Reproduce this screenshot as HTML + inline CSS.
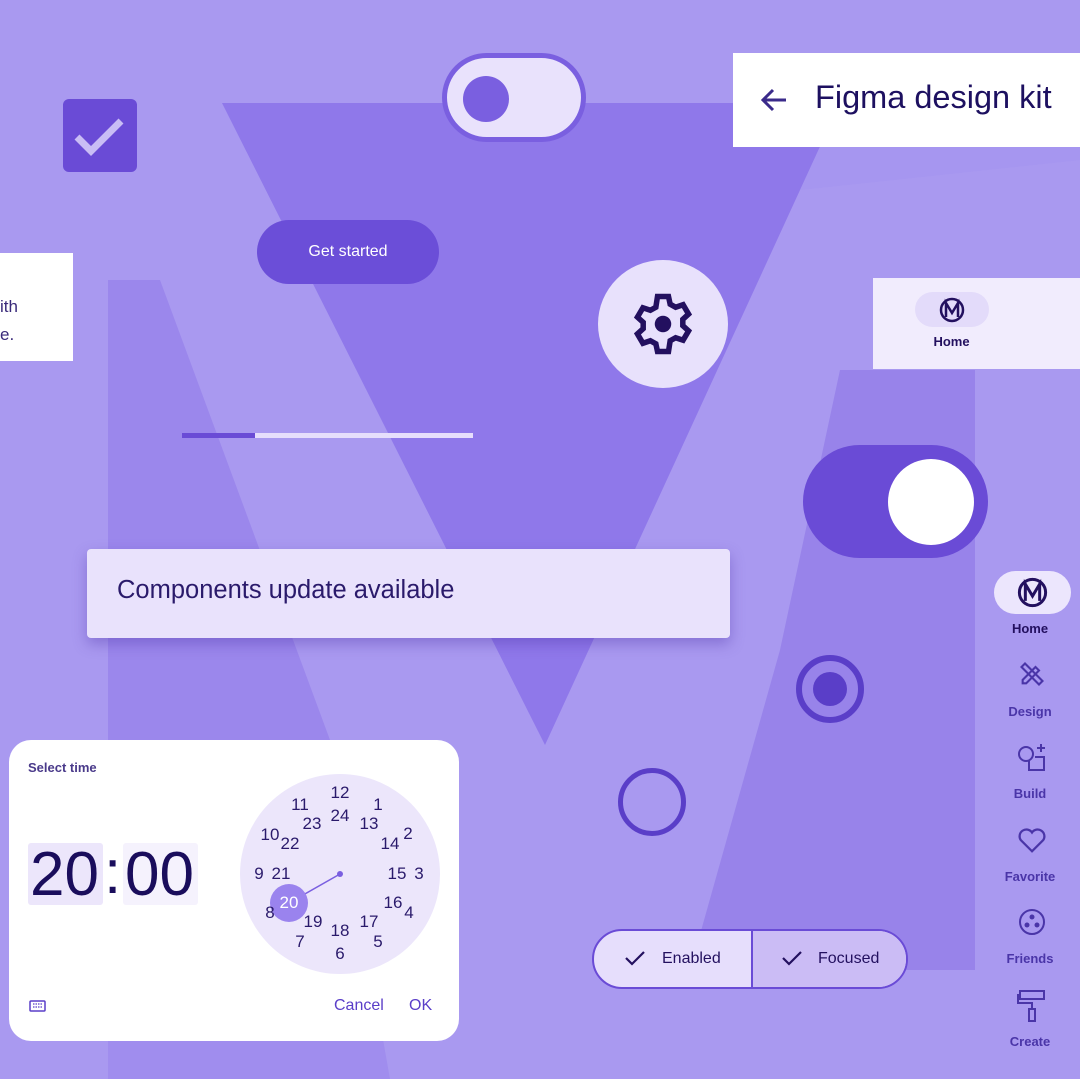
<!DOCTYPE html>
<html><head><meta charset="utf-8"><style>
*{margin:0;padding:0;box-sizing:border-box}
body{width:1080px;height:1079px;overflow:hidden;background:#a999f0;font-family:"Liberation Sans",sans-serif;position:relative}
.a{position:absolute}
.num{position:absolute;transform:translate(-50%,-50%);font-size:17px;color:#2a1a6b}
.navl{position:absolute;left:980px;width:100px;text-align:center;font-size:13px;font-weight:bold;color:#4a35a8}
.tm{position:absolute;font-size:62px;color:#1a0d5c;line-height:62px}
</style></head><body>
<svg class="a" style="left:0;top:0" width="1080" height="1079">
<polygon points="222,103 840,103 545,745" fill="#8f78ea"/>
<polygon points="108,280 160,280 330,740 108,740" fill="#9b87ec"/>
<polygon points="108,740 330,740 390,1079 108,1079" fill="#a08dee"/>
<polygon points="975,370 975,970 690,970 780,650 840,370" fill="#9883ea"/>
<polygon points="840,103 1080,103 1080,160 800,190" fill="#a493f0" opacity="0.5"/>
</svg>
<!-- checkbox -->
<div class="a" style="left:63px;top:99px;width:74px;height:73px;background:#6a4bd6;border-radius:6px"></div>
<svg class="a" style="left:63px;top:99px" width="74" height="73"><path d="M14 38 L28 52 L58 22" stroke="#c9bdf5" stroke-width="7" fill="none"/></svg>
<!-- small toggle -->
<div class="a" style="left:442px;top:53px;width:144px;height:89px;border-radius:45px;background:#e9e2fc;border:5px solid #7a5fe0"></div>
<div class="a" style="left:463px;top:76px;width:46px;height:46px;border-radius:50%;background:#7a5fe0"></div>
<!-- header -->
<div class="a" style="left:733px;top:53px;width:347px;height:94px;background:#fff"></div>
<svg class="a" style="left:758px;top:85px" width="32" height="30"><path d="M28 15 H5 M15 5 L5 15 L15 25" stroke="#3a2a8a" stroke-width="3" fill="none"/></svg>
<div class="a" style="left:815px;top:79px;font-size:32.5px;color:#1d1060">Figma design kit</div>
<!-- get started -->
<div class="a" style="left:257px;top:220px;width:182px;height:64px;border-radius:32px;background:#6b4ed8;color:#fff;font-size:16px;text-align:center;line-height:64px">Get started</div>
<!-- left card -->
<div class="a" style="left:0;top:253px;width:73px;height:108px;background:#fff"></div>
<div class="a" style="left:0;top:293px;font-size:17px;color:#3a2a7a;line-height:28px">ith<br>e.</div>
<!-- gear -->
<div class="a" style="left:598px;top:260px;width:130px;height:128px;border-radius:50%;background:#e8e1fc"></div>
<svg class="a" style="left:630px;top:290px" width="66" height="68" viewBox="0 0 24 24"><path fill="none" stroke="#23105f" stroke-width="2" d="M10 2h4l.6 2.8 2 1.1 2.7-.9 2 3.4-2.1 1.9v2.3l2.1 1.9-2 3.4-2.7-.9-2 1.1L14 22h-4l-.6-2.8-2-1.1-2.7.9-2-3.4 2.1-1.9v-2.3L2.7 9.5l2-3.4 2.7.9 2-1.1z"/><circle cx="12" cy="12" r="3" fill="#23105f"/></svg>
<!-- home card -->
<div class="a" style="left:873px;top:278px;width:207px;height:91px;background:#f1ecfd"></div>
<div class="a" style="left:915px;top:292px;width:74px;height:35px;border-radius:18px;background:#e3dbfa"></div>
<svg class="a" style="left:939px;top:297px" width="26" height="26" viewBox="0 0 26 26"><circle cx="13" cy="13" r="11" fill="none" stroke="#23105f" stroke-width="2.5"/><path d="M7 20V6l6 10 6-10v14" stroke="#23105f" stroke-width="2.5" fill="none"/></svg>
<div class="a" style="left:873px;top:334px;width:157px;text-align:center;font-size:13px;font-weight:bold;color:#23105f">Home</div>
<!-- progress -->
<div class="a" style="left:182px;top:433px;width:291px;height:5px;background:#e6defc"></div>
<div class="a" style="left:182px;top:433px;width:73px;height:5px;background:#6a4bd6"></div>
<!-- big toggle -->
<div class="a" style="left:803px;top:445px;width:185px;height:113px;border-radius:57px;background:#6a4bd6"></div>
<div class="a" style="left:888px;top:459px;width:86px;height:86px;border-radius:50%;background:#fff"></div>
<!-- snackbar -->
<div class="a" style="left:87px;top:549px;width:643px;height:89px;background:#e9e2fc;border-radius:4px;box-shadow:0 6px 14px rgba(70,40,160,.35)"></div>
<div class="a" style="left:117px;top:576px;font-size:25.5px;color:#2a1a6b">Components update available</div>
<!-- radios -->
<div class="a" style="left:796px;top:655px;width:68px;height:68px;border-radius:50%;border:6px solid #5a3ec8"></div>
<div class="a" style="left:813px;top:672px;width:34px;height:34px;border-radius:50%;background:#5a3ec8"></div>
<div class="a" style="left:618px;top:768px;width:68px;height:68px;border-radius:50%;border:5px solid #5a3ec8"></div>
<!-- segmented -->
<div class="a" style="left:592px;top:929px;width:316px;height:60px;border-radius:30px;border:2px solid #6a4bd6;background:#e6defc;overflow:hidden">
<div class="a" style="left:157px;top:0;width:157px;height:58px;background:#cbbcf5;border-left:2px solid #6a4bd6"></div></div>
<svg class="a" style="left:623px;top:948px" width="24" height="20"><path d="M3 10l6 6L21 4" stroke="#23105f" stroke-width="2.2" fill="none"/></svg>
<div class="a" style="left:662px;top:950px;font-size:16px;color:#23105f">Enabled</div>
<svg class="a" style="left:780px;top:948px" width="24" height="20"><path d="M3 10l6 6L21 4" stroke="#23105f" stroke-width="2.2" fill="none"/></svg>
<div class="a" style="left:818px;top:950px;font-size:16px;color:#23105f">Focused</div>
<!-- nav rail -->
<div class="a" style="left:994px;top:571px;width:77px;height:43px;border-radius:22px;background:#ece6fd"></div>
<svg class="a" style="left:1017px;top:577px" width="31" height="31" viewBox="0 0 26 26"><circle cx="13" cy="13" r="11" fill="none" stroke="#23105f" stroke-width="2.5"/><path d="M7 20V6l6 10 6-10v14" stroke="#23105f" stroke-width="2.5" fill="none"/></svg>
<div class="navl" style="top:621px;color:#23105f">Home</div>
<svg class="a" style="left:1018px;top:660px" width="28" height="28" viewBox="0 0 24 24" fill="none" stroke="#4a35a8" stroke-width="1.8"><path d="M4 17l11-11 3 3-11 11H4z"/><path d="M6 3l15 15-3 3L3 6z"/></svg>
<div class="navl" style="top:704px">Design</div>
<svg class="a" style="left:1016px;top:742px" width="32" height="30" viewBox="0 0 32 30" fill="none" stroke="#4a35a8" stroke-width="2"><circle cx="10" cy="12" r="7"/><path d="M13 19v9h15V15h-9"/><path d="M25 2v8M21 6h8"/></svg>
<div class="navl" style="top:786px">Build</div>
<svg class="a" style="left:1017px;top:826px" width="30" height="28" viewBox="0 0 24 22"><path d="M12 20L3 11a5 5 0 0 1 9-6 5 5 0 0 1 9 6z" fill="none" stroke="#4a35a8" stroke-width="1.8"/></svg>
<div class="navl" style="top:869px">Favorite</div>
<svg class="a" style="left:1017px;top:907px" width="30" height="30" viewBox="0 0 30 30"><circle cx="15" cy="15" r="12" fill="none" stroke="#4a35a8" stroke-width="2"/><circle cx="15" cy="10" r="2.5" fill="#4a35a8"/><circle cx="10" cy="18" r="2.5" fill="#4a35a8"/><circle cx="20" cy="18" r="2.5" fill="#4a35a8"/></svg>
<div class="navl" style="top:951px">Friends</div>
<svg class="a" style="left:1017px;top:989px" width="30" height="34" viewBox="0 0 30 34" fill="none" stroke="#4a35a8" stroke-width="2"><rect x="3" y="2" width="24" height="8"/><path d="M3 6H1v8h14v6"/><rect x="12" y="20" width="6" height="12"/></svg>
<div class="navl" style="top:1034px">Create</div>
<!-- time picker -->
<div class="a" style="left:9px;top:740px;width:450px;height:301px;background:#fff;border-radius:22px"></div>
<div class="a" style="left:28px;top:760px;font-size:13px;font-weight:bold;color:#4a3a8a">Select time</div>
<div class="a" style="left:28px;top:843px;width:75px;height:62px;background:#ece6fb;border-radius:3px"></div>
<div class="a" style="left:123px;top:843px;width:75px;height:62px;background:#f5f2fd;border-radius:3px"></div>
<div class="tm" style="left:30px;top:844px">20</div>
<div class="tm" style="left:104px;top:842px">:</div>
<div class="tm" style="left:125px;top:844px">00</div>
<svg class="a" style="left:29px;top:999px" width="18" height="14"><rect x="1" y="2" width="15" height="10" rx="1" fill="none" stroke="#5a3ec8" stroke-width="1.5"/><path d="M4 5h9M4 8h9" stroke="#5a3ec8" stroke-width="1.2" stroke-dasharray="1.5 1"/></svg>
<div class="a" style="left:334px;top:997px;font-size:16px;color:#5a3ec8">Cancel</div>
<div class="a" style="left:409px;top:997px;font-size:16px;color:#5a3ec8">OK</div>
<div class="a" style="left:240px;top:774px;width:200px;height:200px;border-radius:50%;background:#ece6fb"></div>
<svg class="a" style="left:240px;top:774px" width="200" height="200"><line x1="100" y1="100" x2="49" y2="129" stroke="#7a5fe0" stroke-width="1.5"/><circle cx="100" cy="100" r="3" fill="#7a5fe0"/><circle cx="49" cy="129" r="19" fill="#9a83ee"/></svg>
<div class="num" style="left:289px;top:903px;color:#fff">20</div>
<div class="num" style="left:340px;top:793px">12</div><div class="num" style="left:378px;top:805px">1</div>
<div class="num" style="left:300px;top:805px">11</div><div class="num" style="left:340px;top:816px">24</div>
<div class="num" style="left:312px;top:824px">23</div><div class="num" style="left:369px;top:824px">13</div>
<div class="num" style="left:270px;top:835px">10</div><div class="num" style="left:290px;top:844px">22</div>
<div class="num" style="left:390px;top:844px">14</div><div class="num" style="left:408px;top:834px">2</div>
<div class="num" style="left:259px;top:874px">9</div><div class="num" style="left:281px;top:874px">21</div>
<div class="num" style="left:397px;top:874px">15</div><div class="num" style="left:419px;top:874px">3</div>
<div class="num" style="left:393px;top:903px">16</div><div class="num" style="left:409px;top:913px">4</div>
<div class="num" style="left:270px;top:913px">8</div><div class="num" style="left:313px;top:922px">19</div>
<div class="num" style="left:340px;top:931px">18</div><div class="num" style="left:369px;top:922px">17</div>
<div class="num" style="left:300px;top:942px">7</div><div class="num" style="left:378px;top:942px">5</div>
<div class="num" style="left:340px;top:954px">6</div>
</body></html>
